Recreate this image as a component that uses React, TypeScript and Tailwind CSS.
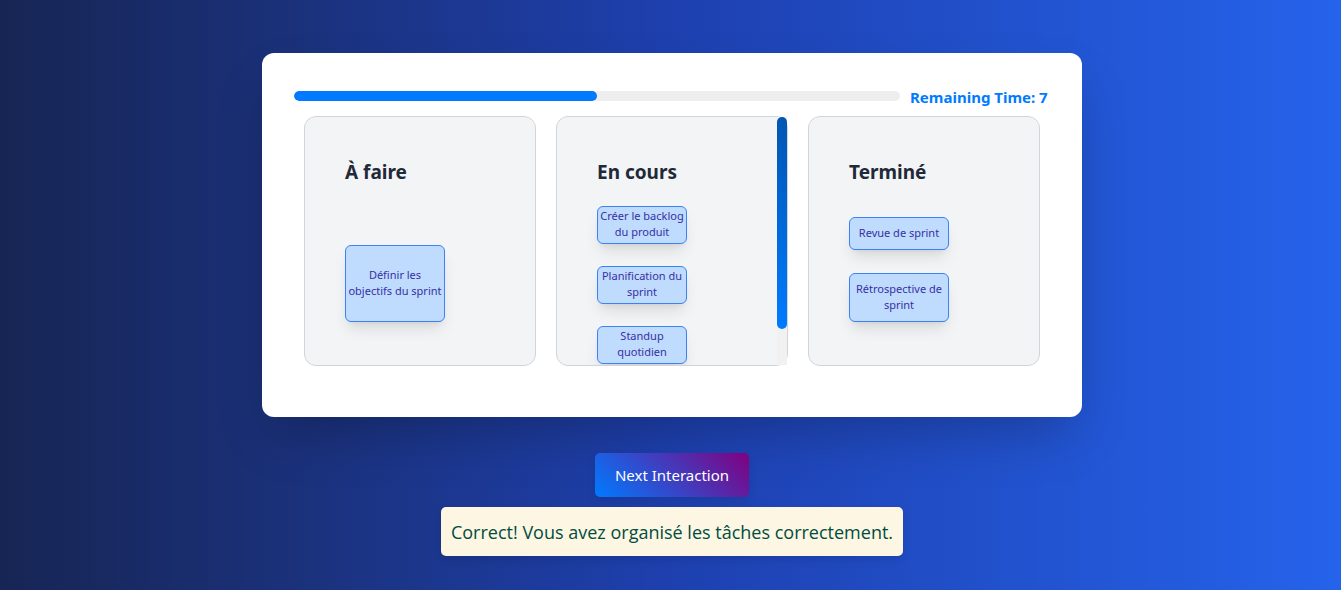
import React from "react";

type Column = {
  title: string;
  tasks: string[];
  list: string;
  task: string;
  scrollable?: boolean;
};

const columns: Column[] = [
  {
    title: "À faire",
    tasks: ["Définir les objectifs du sprint"],
    list: "flex-1 justify-end pb-[3px]",
    task: "w-[100px] min-h-[77px] pb-0.5",
  },
  {
    title: "En cours",
    tasks: ["Créer le backlog du produit", "Planification du sprint", "Standup quotidien"],
    list: "mt-[19px] gap-[22px]",
    task: "w-[90px] min-h-[38px] pb-0.5",
    scrollable: true,
  },
  {
    title: "Terminé",
    tasks: ["Revue de sprint", "Rétrospective de sprint"],
    list: "flex-1 justify-end gap-[23px] pb-[3px]",
    task: "w-[100px] pt-[7px] pb-2",
  },
];

function TaskColumn({ column }: { column: Column }) {
  return (
    <section className="relative h-[250px] rounded-xl border border-[#d1d5db] bg-[#f3f4f6]">
      <div className="flex h-full flex-col overflow-y-auto p-10 [scrollbar-width:none]">
        <h2 className="shrink-0 text-[19px] leading-[30px] font-bold text-[#1f2937]">{column.title}</h2>
        <ul className={`flex flex-col ${column.list}`}>
          {column.tasks.map((task) => (
            <li
              key={task}
              draggable
              className={`flex shrink-0 cursor-grab items-center justify-center rounded-md border border-[#3b82f6] bg-[#bfdbfe] text-center text-[11px] leading-4 text-[#3730a3] shadow-lg ${column.task}`}
            >
              {task}
            </li>
          ))}
        </ul>
      </div>
      {column.scrollable && (
        <div className="absolute inset-y-0 right-0 w-2.5 bg-[#f1f1f1]">
          <div className="h-[212px] rounded-full bg-linear-to-b from-[#0056b3] to-[#007bff]" />
        </div>
      )}
    </section>
  );
}

export default function App() {
  return (
    <main className="flex min-h-screen flex-col items-center bg-linear-to-r from-[#172554] via-[#1e40af] to-[#2563eb] pt-[53px] pb-[34px] pl-[3px] font-['Noto_Sans',sans-serif]">
      <div className="w-full max-w-[820px] rounded-xl bg-white px-8 pt-8 pb-[51px] shadow-2xl">
        <div className="flex items-start gap-2.5 pb-[7px]">
          <div className="mt-1.5 h-2.5 flex-1 overflow-hidden rounded-full bg-[#eee]">
            <div className="h-full w-1/2 rounded-full bg-[#007bff]" />
          </div>
          <p className="min-w-[140px] text-[15px] leading-6 font-bold whitespace-nowrap text-[#007bff]">
            Remaining Time: 7
          </p>
        </div>
        <div className="mx-2.5 grid grid-cols-3 gap-5">
          {columns.map((column) => (
            <TaskColumn key={column.title} column={column} />
          ))}
        </div>
      </div>
      <button
        type="button"
        className="mt-9 h-11 cursor-pointer rounded-[5px] bg-linear-45/srgb from-[#007bff] to-[#800080] px-5 text-[15px] leading-6 text-white shadow-[0_4px_8px_rgba(0,0,0,0.1)]"
      >
        Next Interaction
      </button>
      <p
        role="status"
        className="mt-2.5 rounded-[5px] bg-[#fdf6e3] px-2.5 pt-[11px] pb-[9px] font-['Open_Sans',sans-serif] text-[18px] leading-[29px] font-normal text-[#004d40] shadow-[0_4px_8px_rgba(0,0,0,0.1)]"
      >
        Correct! Vous avez organisé les tâches correctement.
      </p>
    </main>
  );
}
